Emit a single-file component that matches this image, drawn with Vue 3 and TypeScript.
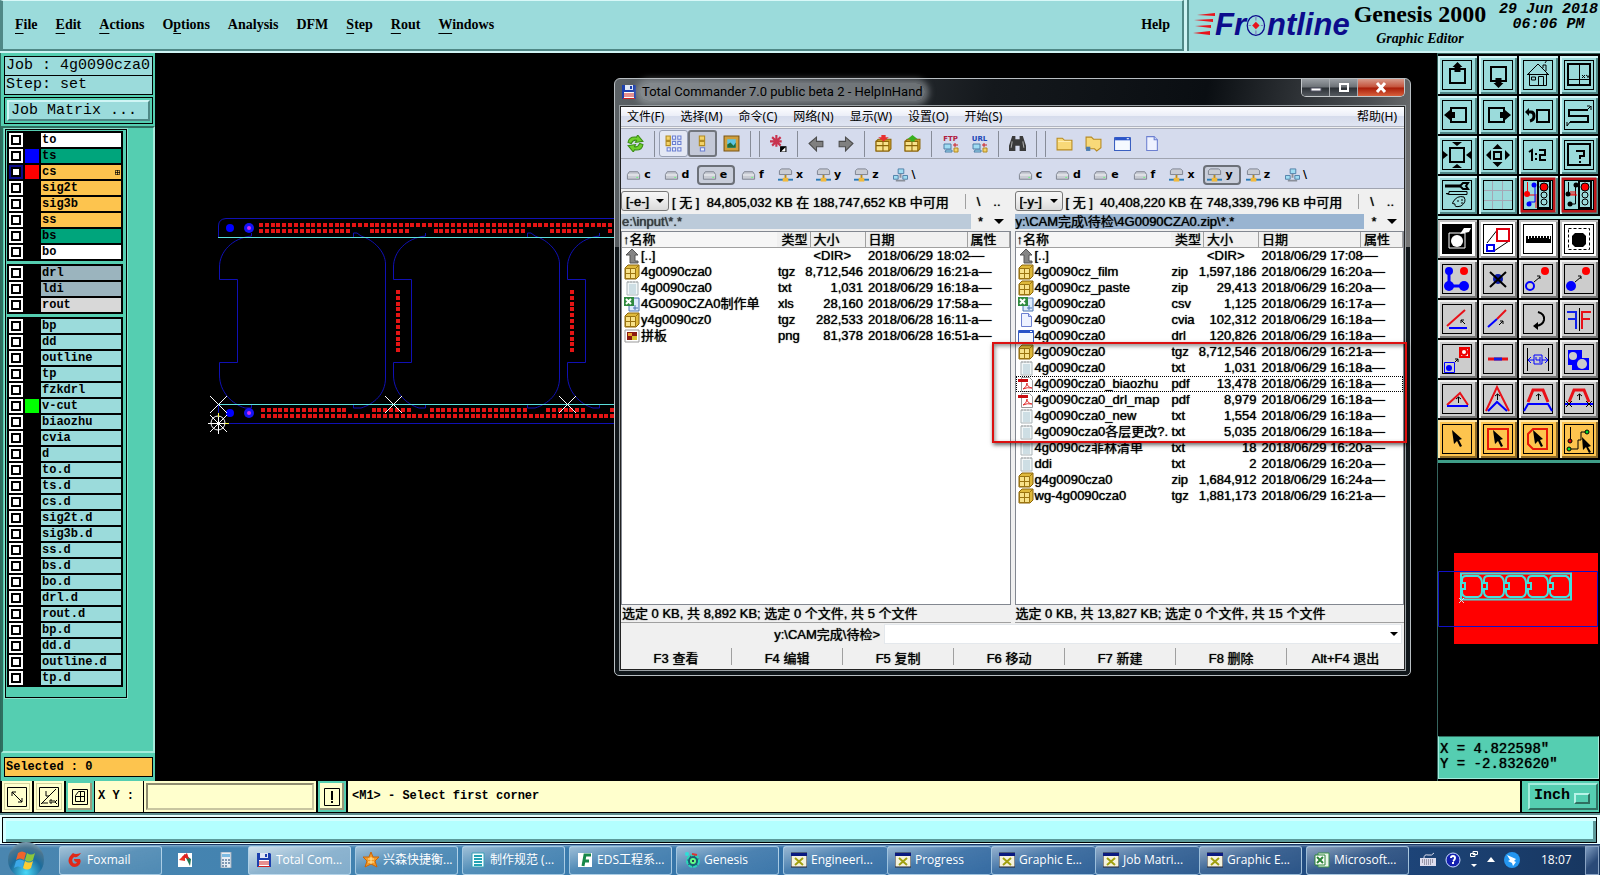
<script setup lang="ts">
import { ref } from 'vue'

interface Layer { name: string; tone: string; color?: string; active?: boolean }
interface FileRow { icon: string; name: string; type: string; size: string; date: string; attr: string; focus?: boolean }
interface Panel { drive: string; free: string; path: string; files: FileRow[]; status: string; active: boolean }

const menus: [string, string, string][] = [
  ['', 'F', 'ile'], ['', 'E', 'dit'], ['', 'A', 'ctions'], ['O', 'p', 'tions'], ['Analysis', '', ''],
  ['DFM', '', ''], ['', 'S', 'tep'], ['', 'R', 'out'], ['', 'W', 'indows'],
]

const layerGroups: Layer[][] = [
  [
    { name: 'to', tone: 'white' }, { name: 'ts', tone: 'green', color: 'blue' },
    { name: 'cs', tone: 'amber', color: 'red', active: true }, { name: 'sig2t', tone: 'amber' },
    { name: 'sig3b', tone: 'amber' }, { name: 'ss', tone: 'amber' },
    { name: 'bs', tone: 'green' }, { name: 'bo', tone: 'white' },
  ],
  [{ name: 'drl', tone: 'slate' }, { name: 'ldi', tone: 'slate' }, { name: 'rout', tone: 'grey' }],
  ['bp', 'dd', 'outline', 'tp', 'fzkdrl', 'v-cut', 'biaozhu', 'cvia', 'd', 'to.d', 'ts.d', 'cs.d', 'sig2t.d',
    'sig3b.d', 'ss.d', 'bs.d', 'bo.d', 'drl.d', 'rout.d', 'bp.d', 'dd.d', 'outline.d', 'tp.d',
  ].map((name) => ({ name, tone: 'aqua', color: name === 'v-cut' ? 'lime' : undefined })),
]

const traffic = (wire: string) =>
  `<rect x="3" y="3" width="32" height="32" fill="#9bdbdb" stroke="#c01418" stroke-width="3"/><rect x="4.500" y="4.500" width="29" height="29" fill="#9bdbdb" stroke="#000"/>${wire}<path d="M19 5h12v27H19z" fill="#9bdbdb" stroke="#000" stroke-width="2"/><circle cx="25" cy="11" r="4" fill="red" stroke="#000"/><circle cx="25" cy="19" r="3" fill="none" stroke="#000" stroke-width="1"/><circle cx="25" cy="26" r="3" fill="none" stroke="#000"/>`

const viewTools: { label: string; art: string }[] = [
  { label: 'Pan up', art: '<path d="M12 13h15v14H12z" fill="none" stroke="#000" stroke-width="2"/><path d="M19.500 6l5 5h-2v5h-6v-5h-2z"/>' },
  { label: 'Pan down', art: '<path d="M12 11h15v14H12z" fill="none" stroke="#000" stroke-width="2"/><path d="M19.500 32l5-5h-2v-5h-6v5h-2z"/>' },
  { label: 'Home', art: '<path d="M8 19l11-11 11 11M10.500 17.500v12h17v-12M24 12V9h3v6M26 7l2-3M12.500 21h4v3h-4zM19.500 29.500v-9h5v9M8 18.500h22" fill="none" stroke="#000"/>' },
  { label: 'Coordinates', art: '<path d="M8 8h22v21H8z" fill="none" stroke="#000" stroke-width="2"/><path d="M19.500 8v21M8 23.500h22" stroke="#000"/><path d="M22 19l3 3M25 19l-3 3M26 19l2 1.500 2-1.500M28 20v2" stroke="#000" fill="none"/>' },
  { label: 'Pan left', art: '<path d="M13 12h15v14H13z" fill="none" stroke="#000" stroke-width="2"/><path d="M6 19l6-5v2h5v6h-5v2z"/>' },
  { label: 'Pan right', art: '<path d="M10 12h15v14H10z" fill="none" stroke="#000" stroke-width="2"/><path d="M32 19l-6-5v2h-5v6h5v2z"/>' },
  { label: 'Previous view', art: '<path d="M18 14h12v12H18z" fill="none" stroke="#000" stroke-width="2"/><path d="M8 16h4q3 0 3 4t-4 5" fill="none" stroke="#000" stroke-width="3"/><path d="M6 16l4-4v8z"/>' },
  { label: 'Serpentine', art: '<path d="M28 14H9v6h19v6H10" fill="none" stroke="#000" stroke-width="2"/><path d="M27 14l4-4M31 10v4M27 10h3M10 26l-3 4M7 26v4" stroke="#000" fill="none"/>' },
  { label: 'Zoom out', art: '<path d="M12 12h14v14H12z" fill="none" stroke="#000" stroke-width="2"/><path d="M19 10l-5-4h10zM19 28l-5 4h10zM10 19l-5-4v8zM28 19l5-4v8z"/>' },
  { label: 'Zoom in', art: '<path d="M15 16h7v7h-7z" fill="none" stroke="#000" stroke-width="2"/><path d="M18.500 8l5 5h-10zM18.500 31l5-5h-10zM7 19l5-5v10zM31 19l-5-5v10z"/>' },
  { label: 'Scale one to two', art: '<path d="M10 16l3-2v11M17 17v2M17 22v2M20 14h6v5h-5v5h6" fill="none" stroke="#000" stroke-width="2"/>' },
  { label: 'Query', art: '<path d="M8 8h22v21H8z" fill="none" stroke="#000" stroke-width="2"/><path d="M16 15h8v5h-4v3M20 25v2" fill="none" stroke="#000" stroke-width="2"/>' },
  { label: 'Setup', art: '<path d="M7 10h15" stroke="#000" stroke-width="3"/><path d="M30 7h-5l-3 3 3 3h5l-2-3z" fill="none" stroke="#000" stroke-width="2"/><path d="M8 17.500h3v-2h18v3H11zM15 26q4-7 11-5 3 5-3 9-7 2-6-2-4 0-2-2zM19 25h2M23 24h2M23 27h2" fill="none" stroke="#000"/>' },
  { label: 'Grid', art: '<path d="M13.500 5v28M23.500 5v28M5 14.500h28M5 24.500h28" stroke="#a5a7b4"/>' },
  { label: 'Net colours', art: traffic('<path d="M8.500 6v12M8 19h12M17 20v12" stroke="red"/><path d="M16 8v18H10" stroke="#00f" stroke-width="1" fill="none"/><circle cx="8" cy="18" r="3" fill="red"/><circle cx="15" cy="9" r="2.500" fill="#00f"/><circle cx="10" cy="28" r="2.500" fill="#00f"/>') },
  { label: 'Net compare', art: traffic('<path d="M8.500 6v12M15.500 9v19H10" stroke="#000" fill="none"/><path d="M9 19h8M11 19v-4M13 19v-4M15 19v-4" stroke="red"/><circle cx="8" cy="18" r="2.500"/><circle cx="16" cy="9" r="2.500"/><circle cx="10" cy="28" r="2.500"/>') },
]

const editTools: { label: string; tone: string; art: string }[] = [
  { label: 'Contour', tone: 'paper', art: '<path d="M5 5h28v28H5z"/><path d="M11 13h16v15H11z" fill="none" stroke="#fff" stroke-width="1"/><circle cx="19" cy="21" r="6" fill="#fff"/><path d="M22 14l4-6h7l-2 4z" fill="#fff"/>' },
  { label: 'Copy region', tone: 'paper', art: '<path d="M8 23L19 9M15 31l15-10" stroke="#000"/><path d="M18 9h12v12H18z" fill="none" stroke="#e00010" stroke-width="2"/><path d="M8 25h7v6H8z" fill="none" stroke="#00e" stroke-width="2"/>' },
  { label: 'Measure', tone: 'paper', art: '<path d="M7 16h25v7H7z"/><path d="M9.500 15v4M12.500 15v3M15.500 15v3M18.500 15v3M21.500 15v3M24.500 15v3M27.500 15v3M30.500 15v4" stroke="#fff"/>' },
  { label: 'Select pad', tone: 'paper', art: '<path d="M8.500 8.500h21v21h-21z" fill="none" stroke="#000" stroke-dasharray="3 2"/><path d="M15 13h8l3 3v8l-3 3h-8l-3-3v-8z"/>' },
  { label: 'Add line', tone: 'stone', art: '<path d="M11 12v14h15" fill="none" stroke="#00f" stroke-width="3"/><circle cx="11" cy="11" r="4" fill="#00f"/><circle cx="11" cy="26" r="5" fill="#00f"/><circle cx="26" cy="26" r="5" fill="#00f"/><circle cx="26" cy="11" r="4" fill="red"/>' },
  { label: 'Delete', tone: 'stone', art: '<circle cx="19" cy="19" r="5" fill="#0a18a8"/><path d="M11 12l16 15M27 12L11 27" stroke="#000" stroke-width="2"/>' },
  { label: 'Move', tone: 'stone', art: '<circle cx="11" cy="26" r="4" fill="none" stroke="#00f" stroke-width="2"/><circle cx="26" cy="11" r="4" fill="red"/><path d="M15 22l6-5M18 16h3v3" fill="none" stroke="#000"/>' },
  { label: 'Copy', tone: 'stone', art: '<circle cx="11" cy="26" r="5" fill="#00f"/><circle cx="26" cy="11" r="4" fill="red"/><path d="M15 22l6-5M18 16h3v3" fill="none" stroke="#000"/>' },
  { label: 'Rotate line', tone: 'stone', art: '<path d="M9 26L27 10" stroke="#e81018" stroke-width="2"/><path d="M11 28h18" stroke="#00f" stroke-width="2"/><path d="M27 24l-4-4M23 23v-3h3" stroke="#000" fill="none"/>' },
  { label: 'Extend line', tone: 'stone', art: '<path d="M18 19l9-9" stroke="#e81018" stroke-width="2"/><path d="M9 27l9-8" stroke="#00f" stroke-width="2"/><path d="M20 25l4-4M21 21h3v3" stroke="#000" fill="none"/>' },
  { label: 'Rotate', tone: 'stone', art: '<path d="M19 12q7 2 6 8-1 5-8 6" fill="none" stroke="#000" stroke-width="2"/><path d="M14 26l5-4v8z"/>' },
  { label: 'Mirror', tone: 'stone', art: '<path d="M7 12h9v17M8 19h8" fill="none" stroke="#1020e8" stroke-width="2"/><path d="M31 12h-9v17M30 19h-8" fill="none" stroke="#e81018" stroke-width="2"/><path d="M19.500 8v23" stroke="#000"/>' },
  { label: 'Replace', tone: 'stone', art: '<path d="M22 8h9v9h-9z" fill="#fff" stroke="#e00" stroke-width="2"/><circle cx="26" cy="12" r="3" fill="#fff" stroke="#e00" stroke-width="2"/><path d="M6.500 22.500h10v10h-10z" fill="none" stroke="#00f"/><circle cx="11" cy="28" r="3" fill="#00f"/><path d="M17 22l3-3M17 19h3v3" stroke="#000" fill="none"/>' },
  { label: 'Break line', tone: 'stone', art: '<path d="M9 19h20" stroke="#e81018" stroke-width="3"/><path d="M15 19h8" stroke="#1020e8" stroke-width="3"/>' },
  { label: 'Spacing', tone: 'stone', art: '<path d="M8.500 8v23M29.500 8v23" stroke="#000"/><path d="M10 20h5M23 20h5M12 17l-3 3 3 3M26 17l3 3-3 3M15 15h8v9h-8zM17 17v3h4M21 17v6" fill="none" stroke="#00f"/>' },
  { label: 'Fill', tone: 'stone', art: '<path d="M8 10h14v8h7v12H12v-5H8z" fill="#00f"/><circle cx="13" cy="16" r="4" fill="#ccc"/><circle cx="22" cy="24" r="5" fill="#ccc"/>' },
  { label: 'Chamfer low', tone: 'stone', art: '<path d="M9 25l13-12 8 12" fill="none" stroke="#e81018" stroke-width="2"/><path d="M9 26h21" stroke="#00f" stroke-width="2"/><path d="M20.500 23v-6M18 19l2.500-2 2.500 2" stroke="#000" fill="none"/>' },
  { label: 'Chamfer high', tone: 'stone', art: '<path d="M7 31L18 7l12 24" fill="none" stroke="#e81018" stroke-width="2"/><path d="M9 31l9-9 10 9" fill="none" stroke="#00f" stroke-width="2"/><path d="M18.500 20v-6M16 16l2.500-2 2.500 2" stroke="#000" fill="none"/>' },
  { label: 'Trapezoid', tone: 'stone', art: '<path d="M9 22l5-12h10l5 12" fill="none" stroke="#e81018" stroke-width="3"/><path d="M5 31l4-7h20l4 7" fill="none" stroke="#00f" stroke-width="2"/><path d="M19.500 20v-6M17 16l2.500-2 2.500 2" stroke="#000" fill="none"/>' },
  { label: 'Trapezoid cut', tone: 'stone', art: '<path d="M9 22l5-12h10l5 12" fill="none" stroke="#e81018" stroke-width="3"/><path d="M5 24h28" stroke="#00f" stroke-width="2"/><path d="M6 21l6 6M12 21l-6 6M26 21l6 6M32 21l-6 6M19.500 20v-6M17 16l2.500-2 2.500 2" stroke="#000" fill="none"/>' },
  { label: 'Select', tone: 'gold', art: '<path d="M14 10l10 9-3 1 3 6-2 1-3-6-3 3z"/>' },
  { label: 'Select in frame', tone: 'gold', art: '<path d="M9 9h20v20H9z" fill="none" stroke="#e81808" stroke-width="2"/><path d="M14 10l10 9-3 1 3 6-2 1-3-6-3 3z"/>' },
  { label: 'Select in polygon', tone: 'gold', art: '<path d="M14 9h14v20H14l-5-5V14z" fill="none" stroke="#e81808" stroke-width="2"/><path d="M14 10l10 9-3 1 3 6-2 1-3-6-3 3z"/>' },
  { label: 'Select net', tone: 'gold', art: '<path d="M10.500 7v14M11 29h7v-9h3v-8h6" fill="none" stroke="#000"/><circle cx="27" cy="12" r="2" fill="#0d3" stroke="#000"/><circle cx="9" cy="29" r="2" fill="#0d3" stroke="#000"/><circle cx="10" cy="21" r="2" fill="#d00" stroke="#000"/><path d="M22 17l9 9-3 1 3 5-2 1-3-6-3 3z"/>' },
]

const art: Record<string, string> = {
  up: '<path d="M8 1l6 6h-3v6h3v2H6V7H2z" fill="#858585" stroke="#555"/>',
  pack: '<path d="M1 4l3-3h11v11l-3 3H1z" fill="#dfb93b" stroke="#8b6508"/><path d="M1.500 4.500h10v10h-10z" fill="#f8e28a" stroke="#9b7410"/><path d="M6.500 4v11M1 9.500h11M12 4l3-3" stroke="#9b7410"/>',
  txt: '<path d="M3 2h11v13H3z" fill="#f2f7f8" stroke="#aab4b8"/><path d="M5 5h7M5 7h7M5 9h7M5 11h7M5 13h7" stroke="#a9c5d0"/><path d="M4 1v2M7 1v2M10 1v2M13 1v2" stroke="#aaa"/>',
  xls: '<path d="M5 2h10v13H5z" fill="#dceafc" stroke="#4c74b0"/><path d="M0 1h10v9H0z" fill="#2f8a3f"/><path d="M2 3l5 5M7 3L2 8" stroke="#fff" stroke-width="2"/><path d="M9 12h5M11 9v5" stroke="#4c74b0"/>',
  png: '<path d="M1 2h14v12H1z" fill="#fff" stroke="#999"/><path d="M3 4h10v8H3z" fill="#8b1a12"/><path d="M4 5h4v3H4z" fill="#e8a02c"/><path d="M8 8h5v4H8z" fill="#d8c030"/>',
  page: '<path d="M3.500 1.500h7l3 3v10h-10z" fill="#eef2ff" stroke="#6c7fd0"/><path d="M10.500 1.500v3h3" fill="#c9d3f8" stroke="#6c7fd0"/>',
  win: '<path d="M.5 2.500h15v12H.5z" fill="#f5f9ff" stroke="#3a5fc0"/><path d="M1 2h14v3H1z" fill="#2b55c8"/><path d="M12 3h2v1h-2z" fill="#fff"/>',
  pdf: '<path d="M3.500 1.500h8l3 3v11h-11z" fill="#fff" stroke="#999"/><path d="M0 3h10v3H0z" fill="#c80c10"/><path d="M5 13q4-2 4-6 0 4 5 5-5-1-9 1" fill="none" stroke="#e03030"/>',
  floppy: '<path d="M1 1h13l1 1v13H1z" fill="#1c3fae"/><path d="M4 1h8v5H4z" fill="#dfe6f5"/><path d="M9 2h2v3H9z" fill="#1c3fae"/><path d="M3 8h10v7H3z" fill="#fff"/><path d="M3 10h10M3 12h10" stroke="#d02020"/><path d="M2 14h12v1H2z" fill="#d02020"/>',
  disk: '<path d="M1.500 7.500l2-3h9l2 3v5h-13z" fill="#c9ccd4" stroke="#7c818e"/><path d="M2 8h12" stroke="#f4f5f8"/><path d="M11 10h2v1h-2z" fill="#6f7"/>',
  net: '<path d="M1.500 3.500l2-2h9l2 2v4h-13z" fill="#c9ccd4" stroke="#7c818e"/><path d="M8 8v4" stroke="#b98c1c" stroke-width="2"/><path d="M0 13h16" stroke="#2a7bb5" stroke-width="2"/><path d="M5 11h6v4H5z" fill="#f0b93c"/>',
  hood: '<path d="M5.500 1.500h6v5h-6zM.5 8.500h5v4h-5zM10.500 8.500h5v4h-5z" fill="#9fdcf2" stroke="#4e7ea6"/><path d="M8 7v4M3 14h10" stroke="#8a8f99" stroke-width="2"/>',
  refresh: '<path d="M1 7q1-6 8-5l1-2 5 6-7 1 1-2q-3-1-5 3z" fill="#6fd02c" stroke="#3a8c14"/><path d="M15 9q-1 6-8 5l-1 2-5-6 7-1-1 2q3 1 5-3z" fill="#6fd02c" stroke="#3a8c14"/>',
  brief: '<path d="M1 1h4v4H1zM1 6h4v4H1z" fill="#f3d268" stroke="#b18a20"/><path d="M7 1h3v3H7zM12 1h3v3h-3zM7 6h3v3H7zM12 6h3v3h-3zM2 12h3v3H2zM7 12h3v3H7zM12 12h3v3h-3z" fill="#e8eeff" stroke="#6b7fd0"/>',
  full: '<path d="M5 1h5v4H5zM5 6h5v4H5z" fill="#f3d268" stroke="#b18a20"/><path d="M6 12h4v3H6z" fill="#e8eeff" stroke="#6b7fd0"/>',
  picture: '<path d="M1 1h14v14H1z" fill="#cf9f3c" stroke="#7b5410"/><path d="M4 4h8v8H4z" fill="#5cc5e4"/><path d="M4 12V9l3-2 3 3 2-3v5z" fill="#1f6d3d"/>',
  star: '<path d="M6 0v11M0 6h11M2 2l8 8M10 2L2 10" stroke="#c8324e" stroke-width="2"/><path d="M10 11h5v5h-5z" fill="#fff" stroke="#000"/><path d="M10 11l5 0-5 5z"/>',
  back: '<path d="M1 8l7-6v4h6v5H8v4z" fill="#808080" stroke="#4d4d4d"/>',
  next: '<path d="M15 8L8 2v4H2v5h6v4z" fill="#808080" stroke="#4d4d4d"/>',
  packup: '<path d="M1 6l2-2h12v9l-2 2H1z" fill="#d4a62c" stroke="#8b6508"/><path d="M1 6h12v9H1z" fill="#f8e28a" stroke="#8b6508"/><path d="M7.500 6v9M1 10h12" stroke="#8b6508"/><path d="M8 6L3 2h3V0h4v2h3z" fill="#e83030"/>',
  unpack: '<path d="M1 6l2-2h12v9l-2 2H1z" fill="#d4a62c" stroke="#8b6508"/><path d="M1 6h12v9H1z" fill="#f8e28a" stroke="#8b6508"/><path d="M7.500 6v9M1 10h12" stroke="#8b6508"/><path d="M8 0l5 4h-3v2H6V4H3z" fill="#38b020"/>',
  netbox: '<path d="M1 1h7v5H1zM3 7h6v2H2z" fill="#9fdcf2" stroke="#4e7ea6"/><path d="M11 5h4v4h-4z" fill="#f3d268" stroke="#b18a20"/><path d="M10 2h5M12 0v4" stroke="#c22"/>',
  binoc: '<path d="M3 1h3v3h4V1h3l3 9v5h-6v-5H6v5H0v-5z" fill="#3a3a3a"/><path d="M3 6l-1 6M13 6l1 6" stroke="#aaa"/>',
  folder: '<path d="M1 3h5l2 2h7v9H1z" fill="#f8d978" stroke="#b88a20"/><path d="M2 6h12" stroke="#fff0b8"/>',
  folder2: '<path d="M1 2h5l2 2h7v8l-4 3-2-2H1z" fill="#f8d978" stroke="#b88a20"/><path d="M1 11h4v4H1z" fill="#4a7cb0"/>',
  fox: '<path d="M14 1Q8 3 6 1 0 6 2 11q3 6 9 3 4-3 2-7H7q0 3 3 3-1 3-4 1-2-4 1-6 4 1 7-4z" fill="#e02818"/>',
  flag: '<path d="M1 1h14v14H1z" fill="#fff"/><path d="M2 8l6-6v7z" fill="#e32"/><path d="M7 2l7 5-1 7z" fill="#275"/><path d="M5 5l5-4 2 6z" fill="#d22"/>',
  calc: '<path d="M3 0h10v16H3z" fill="#e8eef5" stroke="#9ab"/><path d="M4 2h8v3H4z" fill="#7dbbe2"/><path d="M4 7h2v2H4zM7 7h2v2H7zM10 7h2v2h-2zM4 10h2v2H4zM7 10h2v2H7zM10 10h2v2h-2zM4 13h2v2H4zM7 13h2v2H7z" fill="#7f98b3"/>',
  gold: '<path d="M8 0l2 5h6l-4 4 2 6-6-3-6 3 2-6-4-4h6z" fill="#f59a24" stroke="#c86408"/><path d="M5 7h6M8 5v7M5 10h6" stroke="#ffe7a0"/>',
  doc: '<path d="M2 1h12v14H2z" fill="#f6ffff" stroke="#3ba0b8"/><path d="M4 4h8M4 7h8M4 10h8M4 13h8" stroke="#23a2b4" stroke-width="2"/>',
  eff: '<path d="M1 1h14v14H1z" fill="#fff"/><path d="M6 14L8 3h6M7 9h5" fill="none" stroke="#18884a" stroke-width="3"/>',
  gear: '<circle cx="9" cy="9" r="6" fill="#1a5e74" stroke="#28d8b8" stroke-width="2" stroke-dasharray="4 1"/><circle cx="9" cy="9" r="3" fill="#6f8"/><circle cx="9" cy="9" r="1" fill="#104"/><circle cx="3" cy="2" r="2" fill="#2de0d8"/><path d="M8 2l5 1" stroke="#d33" stroke-width="2"/>',
  xwin: '<path d="M0 1h16v14H0z" fill="#f4f2dc" stroke="#223"/><path d="M0 1h16v3H0z" fill="#0a1a80"/><path d="M4 6l8 7M12 6l-8 7" stroke="#a0a010" stroke-width="2"/>',
  excel: '<path d="M4 1h11v14H4z" fill="#eaf6ea" stroke="#3f9348"/><path d="M1 3h10v10H1z" fill="#fff" stroke="#2d8438"/><path d="M3 5l6 6M9 5l-6 6" stroke="#2d8438" stroke-width="2"/>',
}

const row = (icon: string, name: string, type: string, size: string, date: string): FileRow =>
  ({ icon, name, type, size, date: `2018/06/${date}`, attr: name === '[..]' ? '-—' : '-a—', focus: name === '4g0090cza0_biaozhu' })

const panels: Panel[] = [
  {
    drive: 'e', active: false, path: 'e:\\input\\*.*',
    free: '[ 无 ]  84,805,032 KB 在 188,747,652 KB 中可用',
    status: '选定 0 KB, 共 8,892 KB; 选定 0 个文件, 共 5 个文件',
    files: [
      row('up', '[..]', '', '<DIR>', '29 18:02'), row('pack', '4g0090cza0', 'tgz', '8,712,546', '29 16:21'),
      row('txt', '4g0090cza0', 'txt', '1,031', '29 16:18'), row('xls', '4G0090CZA0制作单', 'xls', '28,160', '29 17:58'),
      row('pack', 'y4g0090cz0', 'tgz', '282,533', '28 16:11'), row('png', '拼板', 'png', '81,378', '28 16:51'),
    ],
  },
  {
    drive: 'y', active: true, path: 'y:\\CAM完成\\待检\\4G0090CZA0.zip\\*.*',
    free: '[ 无 ]  40,408,220 KB 在 748,339,796 KB 中可用',
    status: '选定 0 KB, 共 13,827 KB; 选定 0 个文件, 共 15 个文件',
    files: [
      row('up', '[..]', '', '<DIR>', '29 17:08'), row('pack', '4g0090cz_film', 'zip', '1,597,186', '29 16:20'),
      row('pack', '4g0090cz_paste', 'zip', '29,413', '29 16:20'), row('xls', '4g0090cza0', 'csv', '1,125', '29 16:17'),
      row('page', '4g0090cza0', 'cvia', '102,312', '29 16:18'), row('win', '4g0090cza0', 'drl', '120,826', '29 16:18'),
      row('pack', '4g0090cza0', 'tgz', '8,712,546', '29 16:21'), row('txt', '4g0090cza0', 'txt', '1,031', '29 16:18'),
      row('pdf', '4g0090cza0_biaozhu', 'pdf', '13,478', '29 16:18'), row('pdf', '4g0090cza0_drl_map', 'pdf', '8,979', '29 16:18'),
      row('txt', '4g0090cza0_new', 'txt', '1,554', '29 16:18'), row('txt', '4g0090cza0各层更改?.', 'txt', '5,035', '29 16:18'),
      row('txt', '4g0090cz菲林清单', 'txt', '18', '29 16:20'), row('txt', 'ddi', 'txt', '2', '29 16:20'),
      row('pack', 'g4g0090cza0', 'zip', '1,684,912', '29 16:24'), row('pack', 'wg-4g0090cza0', 'tgz', '1,881,173', '29 16:21'),
    ],
  },
]

const drives = ['c', 'd', 'e', 'f', 'x', 'y', 'z', '\\']
const driveIcon = (d: string) => ('cdef'.includes(d) ? 'disk' : d === '\\' ? 'hood' : 'net')
const tcMenus = ['文件(F)', '选择(M)', '命令(C)', '网络(N)', '显示(W)', '设置(O)', '开始(S)']
const tcTools = ['refresh', '|', 'brief', 'full', 'picture', '|', '|', 'star', '|', 'back', 'next', '|', 'packup', 'unpack', '|',
  'FTP', 'URL', '|', 'binoc', '|', '|', 'folder', 'folder2', 'win', 'page']
const fnKeys = ['F3 查看', 'F4 编辑', 'F5 复制', 'F6 移动', 'F7 新建', 'F8 删除', 'Alt+F4 退出']

const tasks: { icon: string; text: string; kind: string }[] = [
  { icon: 'fox', text: 'Foxmail', kind: 'task' }, { icon: 'flag', text: '', kind: 'pin' }, { icon: 'calc', text: '', kind: 'pin' },
  { icon: 'floppy', text: 'Total Com...', kind: 'task current' }, { icon: 'gold', text: '兴森快捷衡...', kind: 'task' },
  { icon: 'doc', text: '制作规范 (...', kind: 'task' }, { icon: 'eff', text: 'EDS工程系...', kind: 'task' },
  { icon: 'gear', text: 'Genesis', kind: 'task' }, { icon: 'xwin', text: 'Engineeri...', kind: 'task joined' },
  { icon: 'xwin', text: 'Progress', kind: 'task joined' }, { icon: 'xwin', text: 'Graphic E...', kind: 'task joined' },
  { icon: 'xwin', text: 'Job Matri...', kind: 'task joined' }, { icon: 'xwin', text: 'Graphic E...', kind: 'task' },
  { icon: 'excel', text: 'Microsoft...', kind: 'task' },
]

/* Pad strips of the panel, in board coordinates. */
const pitch = 5.82
const strip = (x: number, y: number, gaps: [number, number][]) =>
  Array.from({ length: 62 }, (_, i) => ({ x: Math.round(x + i * pitch), y }))
    .filter((p) => !gaps.some(([a, b]) => p.x >= a && p.x < b))
const pads = [
  ...strip(259, 223, []),
  ...strip(259, 229, [[350, 368], [408, 431], [523, 547], [581, 605]]),
  ...strip(261, 408, [[344, 369], [410, 427], [524, 542], [582, 605]]),
  ...strip(261, 414, []),
  ...[396, 570].flatMap((x) => Array.from({ length: 11 }, (_, i) => ({ x, y: Math.round(290 + i * pitch) }))),
]
const cells = [0, 174, 348]
const marks = [218, 393, 567]

const coords = ref('')
const unit = ref('Inch')
const command = ref('')
</script>

<template>
  <div class="desktop">
    <header class="top">
      <nav class="menubar" aria-label="Main menu">
        <button v-for="m in menus" :key="m.join('')" class="menu" type="button">{{ m[0] }}<u>{{ m[1] }}</u>{{ m[2] }}</button>
        <button class="menu help" type="button">Help</button>
      </nav>
      <div class="brand">
        <div class="logo">
          <svg width="22" height="24" viewBox="0 0 22 24" aria-hidden="true">
            <path d="M22 0v3L4 2zM20 6v3L1 7zM18 12v3L2 13zM17 18v4L0 20z" fill="#e8141c" />
          </svg>
          <b>Fr<svg width="21" height="25" viewBox="0 0 17 20" aria-hidden="true"><ellipse cx="8" cy="10" rx="7" ry="8" fill="none" stroke="#0c0c8c" /><path d="M8 7l3 3-3 3-3-3z" fill="#e8141c" /><path d="M8 3v3M8 14v3M2 10h2M12 10h2" stroke="#8080c0" /></svg>ntline</b>
        </div>
        <div class="product"><strong>Genesis 2000</strong><em>Graphic Editor</em></div>
        <time class="stamp"><span>29 Jun 2018</span><span>06:06 PM</span></time>
      </div>
    </header>

    <main class="work">
      <aside class="left">
        <div class="job">
          <p class="field">Job : 4g0090cza0</p>
          <p class="field">Step: set</p>
        </div>
        <div class="matrix"><button type="button">Job Matrix ...</button></div>
        <div class="layers">
          <div class="layerbox">
            <ul v-for="(group, g) in layerGroups" :key="g" class="group">
              <li v-for="l in group" :key="l.name" class="layer">
                <input type="checkbox" :class="{ active: l.active }" :aria-label="'Show ' + l.name" />
                <span class="chip" :class="l.color"></span>
                <button type="button" class="name" :class="l.tone">{{ l.name }}<svg v-if="l.active" width="5" height="5" viewBox="0 0 7 7" aria-hidden="true"><path d="M.5.5h6v6h-6zM3.500 0v7M0 3.500h7" fill="none" stroke="#000" /></svg></button>
              </li>
            </ul>
          </div>
        </div>
        <p class="selected">Selected : 0</p>
      </aside>

      <section class="canvas" aria-label="Board">
        <svg width="100%" height="100%" aria-hidden="true">
          <g transform="translate(-155 -53)">
            <g fill="none" stroke="#1010b4">
              <path d="M615 218.500H226Q218.500 219 218.500 226V237M218.500 405V423.500H615" />
              <g v-for="x in cells" :key="x" :transform="`translate(${x} 0)`">
                <path d="M251.500 233V236C232 238 219.500 252 219.500 267V279.500H237.500V362.500H219.500V375C219.500 392 232 404 245 408H251.500V405" />
                <path d="M353.500 237V233H357L361 236C374 240 385.500 252 385.500 264V378C385.500 394 374 404 361 408H353.500V405" />
              </g>
            </g>
            <path d="M218 237.500H615M218 404.500H615" stroke="#5ce0dc" />
            <rect v-for="(p, i) in pads" :key="i" :x="p.x" :y="p.y" width="4" height="4" fill="#e41414" />
            <g v-for="y in [228, 413]" :key="y">
              <circle cx="230" :cy="y" r="4" fill="#00f" />
              <circle cx="249" :cy="y" r="5" fill="#1414f4" />
              <circle cx="249" :cy="y" r="2" fill="#d030f0" />
            </g>
            <path v-for="x in marks" :key="x" :d="`M${x - 8} 396l17 17M${x + 9} 396l-17 17`" stroke="#fff" />
            <path d="M208 423.500h21M218.500 413v21M210 415l17 17M227 415l-17 17" stroke="#fff" />
            <circle cx="218" cy="423" r="7" fill="none" stroke="#fff" />
            <path d="M218.500 413v4M225 423.500h4" stroke="#ff4" />
          </g>
        </svg>
      </section>

      <aside class="right">
        <div class="tools">
          <button v-for="t in viewTools" :key="t.label" type="button" class="tool" :aria-label="t.label">
            <svg width="38" height="38" viewBox="0 0 38 38"><rect x="4.500" y="4.500" width="29" height="29" fill="none" stroke="#000" /><g v-html="t.art"></g></svg>
          </button>
        </div>
        <div class="tools edit">
          <button v-for="t in editTools" :key="t.label" type="button" class="tool" :class="t.tone" :aria-label="t.label">
            <svg width="38" height="38" viewBox="0 0 38 38"><rect x="4.500" y="4.500" width="29" height="29" fill="none" stroke="#000" /><g v-html="t.art"></g></svg>
          </button>
        </div>
        <div class="overview">
          <svg width="160" height="270" viewBox="0 0 160 270" aria-hidden="true">
            <path d="M16 89h144v91H16z" fill="red" />
            <path d="M.5 107.500h159v55H.5z" fill="none" stroke="#1010c8" />
            <path d="M23 109.500h110v26H23z" fill="none" stroke="#44e0dc" stroke-width="2" />
            <path v-for="i in 5" :key="i" :transform="`translate(${i * 22 - 22} 0)`" d="M28 112h12q4 2 4 7v8q0 5-4 6H28q-4-1-4-5v-3h3v-6h-3v-3q0-4 4-4z" fill="none" stroke="#44e0dc" stroke-width="2" />
            <path d="M21 134l5 5M26 134l-5 5" stroke="#ddd" />
          </svg>
        </div>
        <div class="readout"><span>X = 4.822598"</span><span>Y = -2.832620"</span></div>
      </aside>

      <section class="tc" aria-label="Total Commander">
        <div class="title">
          <svg width="16" height="16" viewBox="0 0 16 16" aria-hidden="true" v-html="art.floppy"></svg>
          <h1>Total Commander 7.0 public beta 2 - HelpInHand</h1>
          <div class="caption">
            <button type="button" aria-label="Minimize"><svg width="12" height="12"><path d="M1 6h10v3H1z" fill="#fff" stroke="#556" /></svg></button>
            <button type="button" aria-label="Maximize"><svg width="12" height="12"><path d="M2 2h8v7H2z" fill="none" stroke="#fff" stroke-width="2" /></svg></button>
            <button type="button" class="close" aria-label="Close"><svg width="12" height="12"><path d="M2 1l8 9M10 1L2 10" stroke="#fff" stroke-width="3" /></svg></button>
          </div>
        </div>
        <div class="client">
          <div class="tcmenu">
            <button v-for="m in tcMenus" :key="m" type="button">{{ m }}</button>
            <button type="button" class="end">帮助(H)</button>
          </div>
          <div class="tcbar">
            <template v-for="(t, i) in tcTools" :key="i">
              <span v-if="t === '|'" class="sep"></span>
              <button v-else type="button" :class="[t, { big: t === 'FTP' || t === 'URL' }]" :aria-label="t">
                <span v-if="t === 'FTP' || t === 'URL'">{{ t }}</span>
                <svg :width="t === 'FTP' || t === 'URL' ? 16 : 17" :height="t === 'FTP' || t === 'URL' ? 10 : 17" :viewBox="t === 'FTP' || t === 'URL' ? '0 0 16 10' : '0 0 16 16'" v-html="art[t] ?? art.netbox"></svg>
              </button>
            </template>
          </div>
          <div class="drivebar">
            <div v-for="p in panels" :key="p.drive" class="drives">
              <button v-for="d in drives" :key="d" type="button" :class="{ on: d === p.drive }">
                <svg width="15" height="16" viewBox="0 0 16 16" aria-hidden="true" v-html="art[driveIcon(d)]"></svg>{{ d }}
              </button>
            </div>
          </div>
          <div class="panes">
            <section v-for="p in panels" :key="p.drive" class="pane" :class="{ live: p.active }">
              <div class="info">
                <span class="pick">
                  <select :aria-label="'Drive ' + p.drive"><option>[-{{ p.drive }}-]</option></select>
                </span>
                <span class="free">{{ p.free }}</span>
                <button type="button" class="root">\</button><button type="button" class="parent">..</button>
              </div>
              <div class="path"><span class="where">{{ p.path }}</span><button type="button">*</button><button type="button" class="hist" aria-label="History"></button></div>
              <div class="list">
                <table>
                  <colgroup><col /><col class="c-type" /><col class="c-gap" /><col class="c-size" /><col class="c-date" /><col class="c-attr" /></colgroup>
                  <thead><tr><th class="first">↑名称</th><th colspan="2">类型</th><th>大小</th><th>日期</th><th>属性</th></tr></thead>
                  <tbody>
                    <tr v-for="(f, i) in p.files" :key="i" :class="{ focus: f.focus }">
                      <td><span class="fname"><svg width="16" height="16" viewBox="0 0 16 16" aria-hidden="true" v-html="art[f.icon]"></svg>{{ f.name }}</span></td>
                      <td>{{ f.type }}</td><td colspan="2" class="size" :class="{ dir: f.icon === 'up' }">{{ f.size }}</td><td class="date">{{ f.date }}</td><td>{{ f.attr }}</td>
                    </tr>
                  </tbody>
                </table>
              </div>
              <p class="status">{{ p.status }}</p>
            </section>
          </div>
          <div class="cmd">
            <label for="cmd">y:\CAM完成\待检&gt;</label>
            <input id="cmd" v-model="command" type="text" />
            <i class="drop"></i>
          </div>
          <div class="fn"><button v-for="k in fnKeys" :key="k" type="button">{{ k }}</button></div>
        </div>
        <div class="callout"></div>
      </section>
    </main>

    <div class="prompt">
      <button type="button" class="mini" aria-label="Corner mode"><svg width="22" height="22"><path d="M1.500 1.500h19v19h-19zM6 6l10 10M6 10V6h4M16 12v4h-4" fill="none" stroke="#000" /></svg></button>
      <button type="button" class="mini" aria-label="Angle mode"><svg width="22" height="22"><path d="M1.500 1.500h19v19h-19zM3 18L18 3M4 17h6M8 5v5h3M12 14h2v3h-2zM16 14v3M19 14l-2 2 2 2" fill="none" stroke="#000" /></svg></button>
      <button type="button" class="mini edged" aria-label="Grid mode"><svg width="22" height="22"><path d="M3.500 3.500h15v15h-15zM6.500 15.500v-6l3-4h6v10zM6 10.500h10M11.500 5v11" fill="none" stroke="#000" /></svg></button>
      <label for="xy">X Y :</label>
      <div class="well"><input id="xy" v-model="coords" type="text" /></div>
      <button type="button" class="mini edged" aria-label="Alert"><svg width="22" height="22"><path d="M3.500 2.500h15v17h-15z" fill="none" stroke="#000" /><path d="M11 5v9M11 15v2" stroke="#000" stroke-width="2" /></svg></button>
      <output>&lt;M1&gt; - Select first corner</output>
      <div class="unit"><select v-model="unit" aria-label="Unit"><option>Inch</option><option>MM</option></select></div>
    </div>
    <div class="strip"><div></div></div>

    <footer class="taskbar">
      <button type="button" class="orb" aria-label="Start">
        <svg width="24" height="24" viewBox="0 0 24 24"><path d="M4 5q4-3 8 0l-2 7q-4-3-8 0z" fill="#f0642c" /><path d="M13 5q4 3 8 0l-2 7q-4 3-8 0z" fill="#8cc63c" /><path d="M2 13q4-3 8 0l-2 7q-4-3-8 0z" fill="#3ca8e8" /><path d="M11 13q4 3 8 0l-2 7q-4 3-8 0z" fill="#fccc34" /></svg>
      </button>
      <button v-for="(t, i) in tasks" :key="i" type="button" :class="t.kind" :aria-label="t.text || t.icon">
        <svg width="16" height="16" viewBox="0 0 16 16" aria-hidden="true" v-html="art[t.icon]"></svg><span v-if="t.text">{{ t.text }}</span>
      </button>
      <div class="tray">
        <svg width="16" height="16" viewBox="0 0 16 16" aria-hidden="true"><path d="M0 6h16v8H0z" fill="#dde" /><path d="M2 8h12M2 10h12M4 12h8" stroke="#556" stroke-dasharray="1 1" /><path d="M4 6q0-4 4-3t6-2" stroke="#dde" fill="none" /></svg>
        <svg width="16" height="16" viewBox="0 0 16 16" aria-hidden="true"><circle cx="8" cy="8" r="7" fill="#1420b0" stroke="#cdf" /><path d="M6 6q0-2 2-2t2 2-2 3M8 10v2" stroke="#fff" stroke-width="2" fill="none" /></svg>
        <svg width="8" height="18" viewBox="0 0 8 18" aria-hidden="true"><path d="M3 .5h4.500v3H3zM.5 2.500H5v3H.5z" fill="#246" stroke="#fff" /><path d="M1 13h6l-3 3z" fill="#fff" /></svg>
        <svg width="8" height="6" viewBox="0 0 8 6" aria-hidden="true"><path d="M0 5h8L4 0z" fill="#fff" /></svg>
        <svg width="16" height="16" viewBox="0 0 16 16" aria-hidden="true"><circle cx="8" cy="8" r="8" fill="#2496f0" /><path d="M3 3l9 4-2 2 2 1-3 4-1-3-4-2 2-1z" fill="#fff" /></svg>
        <time>18:07</time>
      </div>
      <button type="button" class="peek" aria-label="Show desktop"></button>
    </footer>
  </div>
</template>

<style>
body { margin: 0; background: #000; }
</style>

<style scoped>
* { box-sizing: border-box; }
button, input, select, output { font: inherit; color: inherit; margin: 0; padding: 0; border: 0; background: none; border-radius: 0; text-shadow: inherit; }
p, h1, ul { margin: 0; padding: 0; list-style: none; }
svg { display: block; flex: none; }
.desktop { display: flex; flex-direction: column; min-height: 100vh; background: #000; color: #000; overflow: hidden; font-family: "Liberation Sans", "Noto Sans CJK SC", sans-serif; }

.top { display: flex; height: 53px; background: #cdf3f3; gap: 3px; font-family: "Liberation Serif", serif; }
.menubar { flex: 1; display: flex; align-items: center; gap: 18px; padding: 0 12px; background: #9bdbdb; border: solid; border-width: 1px 2px 2px 3px; border-color: #d8f8f8 #4f8886 #4f8886 #4f8886; font-weight: bold; font-size: 14px; margin-bottom: 2px; }
.menu u { text-underline-offset: 4px; }
.help { margin-left: auto; }
.brand { display: flex; width: 413px; padding: 0 2px 0 4px; background: #9bdbdb; border-left: 2px solid #4f8886; margin-bottom: 2px; }
.logo { display: flex; align-items: center; height: 50px; font: italic bold 31px "Liberation Sans", sans-serif; color: #0c0c8c; }
.logo b { display: flex; align-items: center; }
.product { display: flex; flex-direction: column; align-items: center; margin-left: 4px; white-space: nowrap; }
.product strong { font-size: 24px; line-height: 28px; }
.product em { font-size: 14px; line-height: 22px; font-weight: bold; }
.stamp { display: flex; flex-direction: column; align-items: center; margin-left: auto; font: italic bold 15px/15px "Liberation Mono", monospace; white-space: nowrap; padding-top: 2px; }

.work { position: relative; display: flex; flex: 1; min-height: 728px; }
.left { display: flex; flex-direction: column; width: 155px; background: #55ceb1; padding: 1px 2px 4px 3px; border-left: 1px solid #2c6a5c; font-family: "Liberation Mono", monospace; }
.job { border: 1px solid #000; margin-top: 2px; }
.field { height: 18px; padding-left: 1px; font-size: 15px; line-height: 18px; white-space: nowrap; background: #9bdbdb; }
.field + .field { border-top: 1px solid #000; height: 19px; }
.matrix { margin-top: 2px; border: 1px solid #000; padding: 2px; height: 27px; }
.matrix button { display: block; width: 100%; height: 21px; padding-left: 2px; text-align: left; font-size: 15px; line-height: 17px; background: #9bdbdb; border: 2px solid; border-color: #d0f5f5 #4f8886 #4f8886 #d0f5f5; }
.layers { flex: 1; margin: 2px -2px 4px -3px; padding: 1px 26px 0 2px; border: 2px solid; border-color: #2f6f60 #a4ecdc #a4ecdc #2f6f60; }
.layerbox { border: 1px solid #000; padding: 1px 3px 10px 1px; outline: 1px solid #8be0cc; display: flex; flex-direction: column; gap: 3px; }
.group { background: #000; padding: 1px 2px 1px 2px; }
.layer { display: flex; gap: 2px; height: 16px; padding: 1px 0; }
.layer input { appearance: none; width: 14px; height: 14px; background: #fff; border: 2px solid #fff; box-shadow: inset 0 0 0 2px #000; }
.layer input.active { border-color: #0c0c8c; background: #fff; }
.chip { width: 14px; height: 14px; }
.chip.blue { background: #00f; } .chip.red { background: #f00; } .chip.lime { background: #0f0; }
.name { flex: 1; display: flex; align-items: center; justify-content: space-between; height: 14px; padding: 0 1px; font-size: 12px; line-height: 14px; font-weight: bold; text-align: left; }
.white { background: #fff; } .green { background: #00a57c; } .amber { background: #fdc44e; } .slate { background: #9bb4be; } .grey { background: #d8d8d8; } .aqua { background: #9bdbdb; }
.selected { height: 20px; padding-left: 1px; border: 1px solid #000; background: #fdc44e; font-weight: bold; font-size: 12px; line-height: 18px; }
.canvas { flex: 1; min-width: 0; }

.right { display: flex; flex-direction: column; width: 163px; background: #000; border-left: 1px solid #35645e; }
.tools { display: grid; grid-template-columns: repeat(4, 1fr); gap: 2px; padding: 2px 2px 2px 0; background: #000; border-top: 1px solid #35645e; border-bottom: 3px solid #b8eeea; }
.tools.edit { border-top: 0; border-bottom: 3px solid #3f9e88; padding-top: 1px; margin-bottom: 1px; }
.tool { position: relative; height: 38px; background: #9bdbdb; box-shadow: inset 2px 2px #d0f5f5, inset -2px -2px #4f8886; overflow: hidden; }
.tool.paper { background: #fff; box-shadow: inset 2px 2px #c4c4c4, inset -2px -2px #909090; }
.tool.stone { background: #ccc; box-shadow: inset 2px 2px #f2f2f2, inset -2px -2px #777; }
.tool.gold { background: #fdc44e; box-shadow: inset 2px 2px #ffe7a8, inset -2px -2px #8c6a28; }
.overview { flex: 1; }
.readout { display: flex; flex-direction: column; height: 43px; margin: 0 1px 2px 0; padding: 5px 1px; background: #55ceb1; border: 1px solid #a4ecdc; border-top-color: #2f6f60; font: 14px/15px "Liberation Mono", monospace; text-shadow: 0 0 1px #000; white-space: nowrap; }

.tc { position: absolute; left: 614px; top: 25px; width: 797px; display: flex; flex-direction: column; border: 1px solid #b8bec2; border-radius: 6px 6px 5px 5px; background: linear-gradient(100deg, #5c6266 0, #3a3f44 20%, #14181c 46%, #0a0e12 72%, #4a4e52 92%, #777 100%) 0 0 / 100% 168px no-repeat #10161a; padding: 0 5px 5px; }
.title { display: flex; align-items: center; height: 27px; padding: 0 0 2px 1px; gap: 3px; }
.title h1 { font: 13px/18px Roboto, "Noto Sans", sans-serif; padding: 0 2px; color: #000; white-space: nowrap; background: rgba(170, 175, 178, .55); border-radius: 9px; box-shadow: 0 0 6px 4px rgba(170, 175, 178, .55); }
.caption { display: flex; margin-left: auto; align-self: flex-start; height: 18px; border: 1px solid #c4c8ca; border-top: 0; border-radius: 0 0 5px 5px; overflow: hidden; }
.caption button { display: grid; place-items: center; width: 28px; background: linear-gradient(#9a9fa4, #6c7176 48%, #2a2f34 52%, #555a60); border-right: 1px solid #a8acb0; }
.caption .close { width: 46px; border: 0; background: linear-gradient(#d89a8a, #c4513a 48%, #a81c08 52%, #d8603c); }
.client { background: #f0f0f0; border: 1px solid #222; outline: 1px solid #9aa0a4; font-size: 13px; text-shadow: 0 0 1px #000; display: flex; flex-direction: column; }
.tcmenu { display: flex; gap: 16px; height: 20px; padding: 0 7px 0 6px; font: 12px/20px "Noto Sans", "Noto Sans CJK SC", sans-serif; text-shadow: none; background: linear-gradient(#fdfdff, #eceff8 45%, #d6dcec 50%, #e0e5f2); border-bottom: 1px solid #b0b4c0; }
.tcmenu .end { margin-left: auto; }
.tcbar { display: flex; align-items: center; height: 31px; margin-top: 1px; background: #d5dbed; border: solid; border-width: 1px 0; border-color: #a8adbb #fff #a0a4b0; }
.tcbar button { display: flex; flex-direction: column; align-items: center; justify-content: center; width: 29px; height: 27px; border-radius: 3px; text-shadow: none; }
.tcbar .big span { font: bold 7px/8px "DejaVu Sans", sans-serif; color: #b02040; }
.tcbar .URL span { color: #2048b8; }
.tcbar .brief { border: 1px solid #98a0b4; background: #e4e8f4; }
.tcbar .full { border: 2px solid #72767e; background: #c4c9d8; }
.sep { width: 9px; height: 26px; background: linear-gradient(90deg, transparent 4px, #878c98 4px, #878c98 5px, transparent 5px); }
.drivebar { display: flex; height: 30px; padding-top: 2px; background: #d5dbed; border-bottom: 1px solid #a0a4b0; }
.drives { flex: 1; display: flex; align-items: center; text-shadow: none; }
.drives button { display: flex; align-items: center; justify-content: center; gap: 3px; width: 38px; height: 20px; padding-right: 3px; font: bold 11px/18px "DejaVu Sans", sans-serif; border: 1px solid transparent; }
.drives .on { border: 2px solid #6c7078; border-radius: 4px; background: #c9cedb; }
.panes { display: flex; gap: 4px; }
.pane { flex: 1; min-width: 0; }
.info { display: flex; align-items: center; height: 24px; gap: 3px; }
.pick { position: relative; display: block; width: 48px; height: 20px; }
.pick select { appearance: none; width: 100%; height: 100%; padding-left: 4px; border: 1px solid #777; border-radius: 3px; background: linear-gradient(#f6f6f6, #ececec 50%, #dadada); }
.pick::after, .hist::after, .drop { content: ""; position: absolute; right: 5px; top: 8px; border: 4px solid transparent; border-top-color: #000; border-bottom: 0; }
.free { white-space: pre; }
.root { margin-left: auto; border-left: 1px solid #a0a0a0; padding-left: 11px; }
.parent { padding: 0 10px; }
.path { display: flex; height: 17px; line-height: 15px; }
.where { flex: 1; height: 15px; margin-top: 1px; padding-left: 1px; background: #bccbda; color: #3a3f44; white-space: nowrap; }
.live .where { background: #99b4d1; color: #000; }
.path button { width: 20px; }
.path .hist { position: relative; }
.hist::after { right: 7px; top: 6px; border-width: 5px 5px 0; }
.list { height: 374px; margin-top: 1px; background: #fff; border: 1px solid #828790; overflow: hidden; }
table { width: 100%; border-collapse: collapse; table-layout: fixed; }
.c-type { width: 26px; } .c-gap { width: 6px; } .c-size { width: 55px; } .c-date { width: 102px; } .c-attr { width: 42px; }
th { height: 15px; padding: 0 0 0 3px; text-align: left; font-weight: normal; line-height: 15px; background: #f0f0f0; border-right: 1px solid #a0a0a0; border-bottom: 1px solid #a0a0a0; white-space: nowrap; overflow: hidden; }
th.first { background: #f6f6f6; border-right-color: #f0f0f0; padding-left: 1px; }
td { height: 16px; padding: 0; line-height: 16px; white-space: nowrap; }
.fname { display: flex; align-items: center; height: 16px; padding-left: 2px; gap: 1px; }
.size { text-align: right; padding-right: 2px; }
.size.dir { padding-right: 14px; }
.date { padding-left: 3px; }
.focus { outline: 1px dotted #000; outline-offset: -1px; }
.status { height: 18px; line-height: 18px; padding-left: 1px; white-space: pre; border-bottom: 1px solid #a0a0a0; overflow: hidden; }
.cmd { position: relative; display: flex; align-items: center; height: 21px; padding-right: 2px; }
.cmd label { flex: 262; text-align: right; padding-right: 4px; }
.cmd input { flex: 522; height: 20px; min-width: 0; background: #fff; border: 1px solid #e4e8ec; }
.cmd .drop { right: 6px; top: 9px; }
.fn { display: flex; height: 25px; padding: 4px 0; }
.fn button { flex: 111; border-right: 1px solid #a0a0a0; }
.fn button:last-child { flex: 118; border: 0; }
.callout { position: absolute; left: 377px; right: 3px; top: 263px; height: 101px; border: 2px solid #dc1010; box-shadow: 1px 2px 4px rgba(0, 0, 0, .6), inset 1px 2px 4px rgba(0, 0, 0, .45); pointer-events: none; }

.prompt { display: flex; gap: 2px; height: 31px; padding: 0 1px 0 2px; font: bold 12px/31px "Liberation Mono", monospace; }
.mini { display: grid; place-items: center; width: 30px; background: #ffffcd; box-shadow: inset 0 0 0 2px #ffffcd, inset 0 0 0 3px #d6d4a0; }
.mini.edged { width: 28px; background: #ffffcd; box-shadow: inset 0 0 0 2px #55ceb1, inset -1px -1px 0 3px #9a987c; }
.prompt label { width: 48px; margin-left: -1px; padding-left: 3px; background: #ffffcd; }
.well { display: flex; width: 172px; padding: 2px; background: #ffffcd; margin-left: -1px; }
.well input { flex: 1; min-width: 0; border: 2px solid #a3a17e; border-color: #8f8d70 #c8c6a0 #c8c6a0 #8f8d70; }
.prompt output { flex: 1; padding-left: 4px; background: #ffffcd; white-space: nowrap; }
.unit { position: relative; width: 77px; padding: 2px 1px 2px 6px; background: #55ceb1; }
.unit select { appearance: none; display: block; width: 100%; height: 27px; padding: 0 0 2px 4px; font-size: 15px; line-height: 20px; border: 2px solid; border-color: #a4ecdc #2f6f60 #2f6f60 #a4ecdc; }
.unit::after { content: ""; position: absolute; right: 9px; top: 12px; width: 12px; height: 7px; border: 2px solid; border-color: #b8f4e8 #2f6f60 #2f6f60 #b8f4e8; }
.strip { height: 32px; margin-top: 1px; padding: 2px 3px 3px 2px; background: #e8ffff; border-top: 2px solid #5b8c8c; box-shadow: inset 0 -1px #1b3a6a; }
.strip div { height: 26px; border: 1px solid #000; background: #b3ffff; box-shadow: inset 3px 3px #d4ffff, inset -3px -3px #5b9a9a; }

.taskbar { display: flex; align-items: center; height: 30px; padding-left: 8px; background: linear-gradient(rgba(255, 255, 255, .3), transparent 10%), linear-gradient(90deg, #4a86b0, #3d80b0 30%, #2c66a0 60%, #1d4478 88%, #17365f); font: 12px/26px "Open Sans", "Noto Sans CJK SC", sans-serif; color: #fff; }
.orb { display: grid; place-items: center; width: 36px; height: 36px; margin-right: 15px; border-radius: 50%; background: radial-gradient(circle at 50% 85%, #48d8f8, #1c6c9c 45%, #4a7590 70%, #a8c0cc); }
.task { display: flex; align-items: center; gap: 4px; width: 103px; height: 29px; margin-right: 4px; padding-left: 7px; border: 1px solid rgba(190, 220, 240, .75); border-radius: 3px; background: linear-gradient(165deg, rgba(255, 255, 255, .5), rgba(255, 255, 255, .12) 45%, rgba(255, 255, 255, .05)); white-space: nowrap; overflow: hidden; }
.task.current { background: linear-gradient(165deg, rgba(255, 255, 255, .75), rgba(255, 255, 255, .4) 50%, rgba(255, 255, 255, .35)); }
.joined { width: 104px; margin-right: 0; border-right: 0; }
.pin { display: grid; place-items: center; width: 41px; height: 28px; padding-right: 4px; }
.tray { display: flex; align-items: center; gap: 9px; flex: 1; padding-left: 7px; min-width: 0; }
.tray time { margin-left: 12px; }
.peek { width: 14px; height: 29px; margin-right: 1px; border: 1px solid #8aa4c4; background: linear-gradient(135deg, #7f9cc0, #2a4a78 60%); }
</style>
